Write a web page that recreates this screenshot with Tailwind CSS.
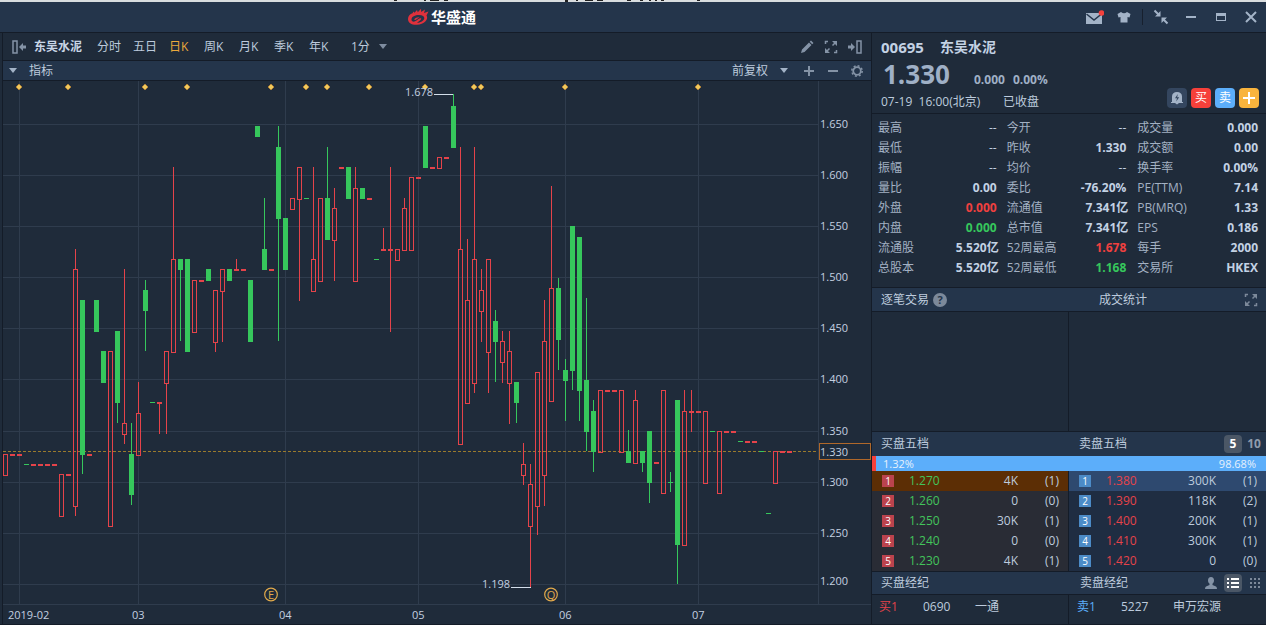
<!DOCTYPE html>
<html lang="zh-CN">
<head>
    <meta charset="UTF-8">
    <meta name="viewport" content="width=device-width, initial-scale=1.0">
    <title>华盛通 - 东吴水泥 00695</title>
    <script src="https://cdn.jsdelivr.net/npm/@tailwindcss/browser@4"></script>
</head>
<body class="bg-[#1f2b3a] text-[#bdcbdd] text-[12px] leading-5 font-['Open_Sans','Noto_Sans_CJK_SC',sans-serif]">

    <!-- Title bar -->
    <div class="h-[2px] bg-[#d9dddf]">
        <svg class="block w-full h-[2px]" aria-hidden="true" fill="#222">
            <rect x="394" width="3" height="1"/><rect x="424" width="2" height="1"/><rect x="430" width="9" height="1"/><rect x="444" width="4" height="1"/>
            <rect x="565" width="3" height="2"/><rect x="576" width="2" height="1"/><rect x="585" width="8" height="1"/><rect x="597" width="6" height="1"/>
            <rect x="627" width="4" height="1"/><rect x="640" width="3" height="1"/><rect x="649" width="2" height="1"/><rect x="655" width="2" height="1"/><rect x="661" width="3" height="1"/><rect x="697" width="3" height="1"/>
        </svg>
    </div>
    <header class="flex items-center h-[31px] pl-[407px] bg-[#24354b] border-b border-[#141c28]">
        <svg class="w-[22px] h-[18px]" viewBox="0 0 22 18" aria-hidden="true">
            <path d="M1 11C1 8 3 6 5.500 5.200L6.500 3.500L7.500 4.700L10 2L10.800 4.200L14 .8L14.200 4L18 1.500L17 5L21.500 3.500L19.500 7.500C22 11.500 17 16.500 10 16.800C4.500 17 1 15 1 11Z" fill="#e0313c"/>
            <path d="M4.500 11.500C4.500 8.500 8 7 12 7C15.500 7 17.500 8.300 17.300 10.300C17 13 13.500 14.800 10 14.800C11 13.800 13.800 12.500 14.300 10.800C13.300 9.600 11.500 11 10.500 11.800C9 13 7 14 5.700 13.500C4.900 13 4.500 12.500 4.500 11.500Z" fill="#24354b"/>
            <path d="M7 11.500C8.500 9.500 11 8.800 12.500 9.300C11.500 10 10 11.300 8.500 12Z" fill="#e0313c"/>
        </svg>
        <h1 class="ml-[2px] text-[15px] font-bold text-white">华盛通</h1>
        <div class="flex items-center ml-auto text-[#a3b3c7]">
            <button class="flex justify-center w-[30px]" aria-label="消息">
                <svg class="w-[20px] h-[16px]" viewBox="0 0 20 16"><rect x="2" y="4" width="16" height="11" fill="currentColor"/><path d="M2.500 5L10 11L17.500 5" fill="none" stroke="#24354b" stroke-width="1.500"/><circle cx="17.500" cy="4" r="2.800" fill="#f5413c"/></svg>
            </button>
            <button class="flex justify-center w-[30px]" aria-label="皮肤">
                <svg class="w-[14px] h-[12px]" viewBox="0 0 14 12" fill="currentColor"><path d="M4 1Q7 3.500 10 1L13.500 3L12.500 6.500L10.500 6V11.500H3.500V6L1.500 6.500L.5 3Z"/></svg>
            </button>
            <span class="mx-[3px] w-px h-4 bg-[#17202e]"></span>
            <button class="flex justify-center w-[30px]" aria-label="精简模式">
                <svg class="w-[16px] h-[16px]" viewBox="0 0 16 16" fill="currentColor" stroke="currentColor"><path d="M7.500 2V7.500H2Z M8.500 8.500H14L8.500 14Z" stroke="none"/><path d="M1.500 1.500L5.500 5.500M14.500 14.500L10.500 10.500" stroke-width="2"/></svg>
            </button>
            <button class="flex justify-center w-[30px]" aria-label="最小化">
                <svg class="w-[10px] h-[10px]" viewBox="0 0 10 10"><rect y="4" width="10" height="2" fill="currentColor"/></svg>
            </button>
            <button class="flex justify-center w-[30px]" aria-label="最大化">
                <svg class="w-[10px] h-[8px]" viewBox="0 0 10 8" fill="none" stroke="currentColor"><rect x=".5" y=".5" width="9" height="7"/><path d="M0 1.500H10" stroke-width="3"/></svg>
            </button>
            <button class="flex justify-center w-[30px]" aria-label="关闭">
                <svg class="w-[12px] h-[12px]" viewBox="0 0 12 12" fill="none" stroke="currentColor" stroke-width="2"><path d="M1 1L11 11M11 1L1 11"/></svg>
            </button>
        </div>
    </header>

    <main class="flex border-b border-[#141c28]">

        <!-- Left: chart -->
        <section class="flex-1 min-w-0 ml-[2px] border-l border-[#141c28]">
            <nav class="flex items-center h-[28px] pl-[8px] pr-1 border-b border-[#141c28]">
                <button aria-label="展开列表">
                    <svg class="block w-[15px] h-[14px] text-[#8493a6]" viewBox="0 0 15 14"><rect x="2" y="1" width="4" height="12" fill="none" stroke="currentColor" stroke-width="1.500"/><path d="M8 7L12 3V5.500H15V8.500H12V11Z" fill="currentColor"/></svg>
                </button>
                <b class="ml-[8px] w-[63px] text-[#c9d6e6] whitespace-nowrap">东吴水泥</b>
                <button class="w-9 text-left">分时</button>
                <button class="w-9 text-left">五日</button>
                <button class="w-[35px] text-left text-[#eba93c]">日K</button>
                <button class="w-[35px] text-left">周K</button>
                <button class="w-[35px] text-left">月K</button>
                <button class="w-[35px] text-left">季K</button>
                <button class="w-[35px] text-left">年K</button>
                <div class="flex items-center ml-[7px]">
                    <select class="appearance-none bg-transparent w-[36px]" aria-label="分钟周期"><option>1分</option></select>
                    <svg class="-ml-2 w-[8px] h-[5px] text-[#7e8da0] pointer-events-none" viewBox="0 0 8 5"><path d="M0 0H8L4 5Z" fill="currentColor"/></svg>
                </div>
                <div class="flex ml-auto text-[#8493a6]">
                    <button class="flex justify-center w-6" aria-label="画线">
                        <svg class="w-[14px] h-[14px]" viewBox="0 0 14 14" fill="currentColor"><path d="M1 13L2 9.500L9 2.500L11.500 5L4.500 12Z M9.700 1.800L11 .5L13.500 3L12.200 4.300Z"/></svg>
                    </button>
                    <button class="flex justify-center w-6" aria-label="全屏">
                        <svg class="w-[14px] h-[14px]" viewBox="0 0 14 14" fill="none" stroke="currentColor" stroke-width="1.500"><path d="M1.500 4V1.500H4M10 12.500H12.500V10"/><path d="M8.500 5.500L12 2M5.500 8.500L2 12"/><path d="M8 1H13V6Z M1 8V13H6Z" fill="currentColor" stroke="none"/></svg>
                    </button>
                    <button class="flex justify-center w-6" aria-label="收起报价">
                        <svg class="w-[14px] h-[14px]" viewBox="0 0 14 14"><rect x="9" y="1" width="4" height="12" fill="none" stroke="currentColor" stroke-width="1.500"/><path d="M7 7L3 3V5.500H0V8.500H3V11Z" fill="currentColor"/></svg>
                    </button>
                </div>
            </nav>
            <div class="flex items-center h-[20px] pl-[6px] pr-[2px] bg-[#24354b] border-b border-[#141c28]">
                <button class="flex items-center gap-3">
                    <svg class="w-[8px] h-[5px] text-[#a3b3c7]" viewBox="0 0 8 5"><path d="M0 0H8L4 5Z" fill="currentColor"/></svg>
                    指标
                </button>
                <div class="flex items-center ml-auto">
                    <select class="appearance-none bg-transparent w-[56px]" aria-label="复权方式"><option>前复权</option></select>
                    <svg class="-ml-2 mr-[9px] w-[8px] h-[5px] text-[#a3b3c7] pointer-events-none" viewBox="0 0 8 5"><path d="M0 0H8L4 5Z" fill="currentColor"/></svg>
                </div>
                <div class="flex text-[#8493a6]">
                    <button class="flex justify-center w-6" aria-label="放大">
                        <svg class="w-[12px] h-[12px]" viewBox="0 0 12 12" stroke="currentColor" stroke-width="2"><path d="M1 6H11M6 1V11"/></svg>
                    </button>
                    <button class="flex justify-center w-6" aria-label="缩小">
                        <svg class="w-[12px] h-[12px]" viewBox="0 0 12 12" stroke="currentColor" stroke-width="2"><path d="M1 6H11"/></svg>
                    </button>
                    <button class="flex justify-center w-6" aria-label="设置">
                        <svg class="w-[12px] h-[12px]" viewBox="0 0 12 12" fill="none" stroke="currentColor"><circle cx="6" cy="6" r="3.800" stroke-width="1.800"/><circle cx="6" cy="6" r="5.200" stroke-width="1.500" stroke-dasharray="2 2.080"/></svg>
                    </button>
                </div>
            </div>

            <svg id="chart" class="block w-full h-auto text-[11px]" viewBox="3 81 868 543" role="img" aria-label="东吴水泥 日K">
                <g id="grid" stroke="#2f3c4d" shape-rendering="crispEdges"></g>
                <path d="M3 451.500H818" stroke="#9a7a2c" stroke-dasharray="3 2" shape-rendering="crispEdges"/>
                <g id="candles" shape-rendering="crispEdges"></g>
                <g id="marks" fill="#f0c95c" stroke="#c9852b" stroke-width=".6"></g>
                <path d="M434 94.500H453M511 587.500H531" stroke="#d3deea" shape-rendering="crispEdges"/>
                <rect x="819.500" y="443.500" width="51" height="16" fill="none" stroke="#b0682a" shape-rendering="crispEdges"/>
                <g id="labels" fill="#c3d0e0">
                    <text x="405" y="96">1.678</text>
                    <text x="482" y="588">1.198</text>
                </g>
                <g fill="none" stroke="#e0a94b" stroke-width="1.200"><circle cx="271" cy="594.500" r="6.300"/><circle cx="551" cy="594.500" r="6.300"/></g>
                <g fill="#e0a94b" text-anchor="middle"><text x="271" y="598.500">E</text><text x="551" y="598.500">Q</text></g>
            </svg>
        </section>

        <!-- Right: quote -->
        <aside class="w-[395px] shrink-0 flex flex-col border-l border-[#141c28]">
            <div class="h-[81px] pl-[9px] pr-[7px] border-b border-[#141c28] whitespace-nowrap">
                <h2 class="flex items-center gap-4 h-7 font-bold text-[#c3d2e4]"><span class="text-[15px]">00695</span><span class="text-[14px]">东吴水泥</span></h2>
                <div class="flex items-baseline h-[26px] pl-[2px] font-bold text-[#9fb0c6]"><span class="w-[91px] text-[26px] leading-[26px]">1.330</span><span class="mr-2">0.000</span><span>0.00%</span></div>
                <div class="flex items-center h-[26px]">
                    <span class="w-[122px] pt-[3px]">07-19&nbsp; 16:00(北京)</span><span class="pt-[3px]">已收盘</span>
                    <div class="flex gap-1 ml-auto -mt-1 text-white">
                        <button class="flex items-center justify-center size-5 rounded-sm bg-[#34465f]" aria-label="提醒">
                            <svg class="w-[12px] h-[14px]" viewBox="0 0 12 14"><path d="M1 11V5.500C1 2.500 3 1 6 1S11 2.500 11 5.500V11H12V12H8L6 13.500L4 12H0V11Z" fill="#a3b3c7"/><path d="M6.800 3L4 7.300H6L5.200 10.500L8.200 6.200H6.200Z" fill="#34465f"/></svg>
                        </button>
                        <button class="size-5 rounded-sm bg-[#f6403a]">买</button>
                        <button class="size-5 rounded-sm bg-[#5caefa]">卖</button>
                        <button class="flex items-center justify-center size-5 rounded-sm bg-[#f9b43d]" aria-label="添加自选">
                            <svg class="w-[12px] h-[12px]" viewBox="0 0 12 12" stroke="currentColor" stroke-width="2"><path d="M0 6H12M6 0V12"/></svg>
                        </button>
                    </div>
                </div>
            </div>

            <div class="h-[174px] pt-1 px-[6px] border-b border-[#141c28]">
                <table class="w-full table-fixed whitespace-nowrap text-right [&_th]:text-left [&_th]:font-normal [&_th]:text-[#a3b1c3] [&_td]:font-bold [&_td]:text-[#c3d2e4]">
                    <colgroup><col class="w-[60px]"><col><col class="w-[69px]"><col><col class="w-[71px]"><col></colgroup>
                    <tbody id="stats"></tbody>
                </table>
            </div>

            <div class="flex items-center h-[24px] bg-[#24354b] border-b border-[#141c28]">
                <div class="flex items-center gap-1 w-1/2 pl-[9px]">逐笔交易
                    <button class="size-[14px] rounded-full bg-[#7c899a] text-[#24354b] text-[11px] leading-[14px] font-bold" aria-label="帮助">?</button>
                </div>
                <div class="flex items-center flex-1 pl-[30px]">成交统计
                    <button class="ml-auto mr-2 text-[#7c899a]" aria-label="展开">
                        <svg class="block w-[14px] h-[14px]" viewBox="0 0 14 14" fill="none" stroke="currentColor" stroke-width="1.500"><path d="M1.500 4V1.500H4M10 12.500H12.500V10"/><path d="M8.500 5.500L12 2M5.500 8.500L2 12"/><path d="M8 1H13V6Z M1 8V13H6Z" fill="currentColor" stroke="none"/></svg>
                    </button>
                </div>
            </div>
            <div class="grid grid-cols-2 h-[120px] border-b border-[#141c28]">
                <div class="border-r border-[#141c28]"></div>
            </div>

            <!-- Order book -->
            <div class="flex items-center h-[24px] bg-[#24354b]">
                <div class="w-1/2 pl-[9px]">买盘五档</div>
                <div class="flex items-center flex-1 pl-[10px]">卖盘五档
                    <button class="ml-auto w-[18px] h-[18px] leading-[18px] rounded-sm bg-[#4b5766] text-white font-bold">5</button>
                    <button class="mx-[4px] w-[16px] font-bold text-[#8f9cad]">10</button>
                </div>
            </div>
            <div class="flex justify-between h-[15px] pl-[7px] pr-[10px] border-l-4 border-[#f6403a] bg-[#5caefa] text-[11px] leading-[15px] text-[#e6f1fc]"><span>1.32%</span><span>98.68%</span></div>
            <div class="grid grid-cols-2 h-[100px] border-b border-[#141c28]">
                <div class="border-r border-[#141c28]">
                    <table class="w-full table-fixed text-right"><colgroup><col class="w-[37px]"><col class="w-[50px]"><col><col class="w-[50px]"></colgroup><tbody id="bids"></tbody></table>
                </div>
                <table class="w-full table-fixed text-right"><colgroup><col class="w-[37px]"><col class="w-[50px]"><col><col class="w-[50px]"></colgroup><tbody id="asks"></tbody></table>
            </div>

            <!-- Brokers -->
            <div class="relative flex items-center h-[24px] bg-[#24354b] border-y border-[#141c28]">
                <div class="w-1/2 pl-[9px]">买盘经纪</div>
                <div class="flex items-center flex-1 pl-[11px]">卖盘经纪
                    <button class="ml-auto mr-[7px] text-[#8493a6]" aria-label="经纪"><svg class="block w-[12px] h-[12px]" viewBox="0 0 12 12" fill="currentColor"><path d="M6 0C8 0 9 1.500 9 3.500C9 5 8.300 6 7.500 6.700V8L11 9.500Q12 10 12 12H0Q0 10 1 9.500L4.500 8V6.700C3.700 6 3 5 3 3.500C3 1.500 4 0 6 0Z"/></svg></button>
                    <button class="flex items-center justify-center w-[18px] h-[18px] rounded-sm bg-[#4b5766] text-white" aria-label="列表"><svg class="w-[12px] h-[12px]" viewBox="0 0 12 12" fill="currentColor" shape-rendering="crispEdges"><path d="M0 1H2V3H0Z M4 1H12V3H4Z M0 5H2V7H0Z M4 5H12V7H4Z M0 9H2V11H0Z M4 9H12V11H4Z"/></svg></button>
                    <button class="ml-[7px] mr-[5px] text-[#7c899a]" aria-label="网格"><svg class="block w-[12px] h-[12px]" viewBox="0 0 12 12" fill="currentColor" shape-rendering="crispEdges"><path d="M1 1h2v2h-2z M5 1h2v2h-2z M9 1h2v2h-2z M1 5h2v2h-2z M5 5h2v2h-2z M9 5h2v2h-2z M1 9h2v2h-2z M5 9h2v2h-2z M9 9h2v2h-2z"/></svg></button>
                </div>
            </div>
            <div class="grid grid-cols-2 flex-1">
                <div class="flex pt-[2px] pl-[7px] border-r border-[#141c28]"><span class="w-[44px] text-[#e5434a]">买1</span><span class="w-[52px]">0690</span><span>一通</span></div>
                <div class="flex pt-[2px] pl-[8px]"><span class="w-[44px] text-[#5caefa]">卖1</span><span class="w-[52px]">5227</span><span>申万宏源</span></div>
            </div>
        </aside>
    </main>

    <script>
        // [color, high, top, bottom, low]; a single number after the color is a flat bar
        const candles = [
            ['r',454,454,476,476],['r',454],['r',454],['g',464],['r',464],['r',464],['r',464],['r',464],
            ['r',474,474,517,517],['r',474],['r',249,269,507,516],['g',300,300,455,474],['r',454],
            ['g',300,300,332,332],['g',351,351,383,383],['r',351,351,527,527],['g',331,331,403,423],
            ['r',269,423,435,444],['g',423,454,495,505],['r',382,413,456,456],['g',280,290,311,351],
            ['g',402],['r',402,402,404,434],['r',351,351,384,434],['r',167,259,353,353],
            ['g',259,259,270,341],['g',259,259,352,352],['r',280,280,333,333],['r',280],
            ['g',269,269,281,281],['r',290,290,343,352],['r',269,269,292,342],['g',269,269,281,281],
            ['r',259,269,271,271],['r',269],['g',280,280,342,342],['g',126,126,137,137],
            ['g',198,249,270,270],['r',269],['g',126,147,219,341],['g',218,218,270,270],
            ['r',198,198,210,210],['r',167,167,200,301],['g',198],['r',167,259,292,292],
            ['r',198,198,282,282],['g',147,198,240,240],['r',188,208,241,281],['r',167],
            ['g',167,167,199,199],['r',167,188,282,282],['g',188,188,199,199],['r',198],['g',259],
            ['r',228,249,251,251],['r',167,249,251,332],['r',249,249,261,261],['r',198,208,251,251],
            ['r',177,177,251,251],['r',177],['g',126,126,168,168],['r',167],['r',157,157,169,169],['r',157],
            ['g',94,106,148,148],['r',147,249,445,445],['r',239,300,404,404],['r',147,259,384,393],
            ['r',269,290,312,342],['r',259,259,353,393],['g',310,321,342,382],['r',331,341,363,383],
            ['r',331,351,384,424],['g',382,382,403,423],['r',443,464,476,485],['r',464,484,527,587],
            ['r',372,372,507,535],['r',300,341,476,506],['r',186,288,402,402],['g',278,288,340,370],
            ['g',359,370,381,421],['g',226,226,371,390],['g',237,237,391,421],['g',298,380,432,451],
            ['g',400,411,452,472],['r',390,390,453,453],['r',390],['r',390],['r',390,390,453,453],
            ['g',430,451,463,463],['r',390,400,464,464],['g',451,451,463,472],['g',431,431,483,503],
            ['r',462],['r',390,390,494,494],['g',472,482,483,492],['g',400,400,545,584],
            ['r',390,411,546,546],['r',390,411,413,432],['r',411],['r',411,411,484,484],['g',431],
            ['r',431,431,494,494],['r',431],['r',431],['g',441],['r',441],['r',441],['g',451],['g',513],
            ['r',451,451,484,484],['r',451],['r',451]
        ];
        const colors = { r: '#e5434a', g: '#36c75c' };
        const rect = (x, y, w, h, c) => `<rect x="${x}" y="${y}" width="${w}" height="${h}" fill="${c}"/>`;

        document.getElementById('candles').innerHTML = candles.map(([k, high, top, bottom, low], i) => {
            const x = 5 + 7 * i, c = colors[k];
            if (top === undefined) return rect(x - 2, high, 5, k === 'r' ? 2 : 1, c);
            const wick = rect(x, high, 1, top - high, c) + rect(x, bottom, 1, low - bottom, c);
            if (k === 'g' || bottom - top < 3) return wick + rect(x - 2, top, 5, bottom - top, c);
            return wick + `<rect x="${x - 1.5}" y="${top + 0.5}" width="4" height="${bottom - top - 1}" fill="none" stroke="${c}"/>`;
        }).join('');

        // Grid lines and axis labels
        const rows = [124, 175, 226, 277, 328, 379, 431, 482, 533, 584];
        const months = [[19, '2019-02', 8], [138, '03', 132], [285, '04', 279], [418, '05', 412], [565, '06', 559], [698, '07', 692]];
        document.getElementById('grid').innerHTML =
            rows.map(y => `<path d="M3 ${y}.5H818"/>`).join('') +
            months.map(([x]) => `<path d="M${x}.5 81V604"/>`).join('') +
            '<path d="M818.5 81V604M3 604.5H871"/>';
        document.getElementById('labels').innerHTML +=
            rows.map((y, i) => `<text x="820" y="${(i === 9 ? 581 : y) + 4}">${(1.65 - i * 0.05).toFixed(3)}</text>`).join('') +
            '<text x="820" y="456">1.330</text>' +
            months.map(([, t, x]) => `<text x="${x}" y="619">${t}</text>`).join('');
        document.getElementById('marks').innerHTML =
            [19, 68, 145, 187, 271, 306, 327, 369, 425, 474, 481, 565, 698]
                .map(x => `<path d="M${x} 84L${x + 3} 87L${x} 90L${x - 3} 87Z"/>`).join('');

        // Quote table
        const stats = [
            ['最高', '--', '今开', '--', '成交量', '0.000'],
            ['最低', '--', '昨收', '1.330', '成交额', '0.00'],
            ['振幅', '--', '均价', '--', '换手率', '0.00%'],
            ['量比', '0.00', '委比', '-76.20%', 'PE(TTM)', '7.14'],
            ['外盘', '0.000', '流通值', '7.341亿', 'PB(MRQ)', '1.33'],
            ['内盘', '0.000', '总市值', '7.341亿', 'EPS', '0.186'],
            ['流通股', '5.520亿', '52周最高', '1.678', '每手', '2000'],
            ['总股本', '5.520亿', '52周最低', '1.168', '交易所', 'HKEX']
        ];
        const tint = { '外盘': 'text-[#f0403f]!', '52周最高': 'text-[#f0403f]!', '内盘': 'text-[#36c75c]!', '52周最低': 'text-[#36c75c]!' };
        const pads = ['', 'pl-2', 'pl-[9px]'];
        // values that end in 亿 run closer to the next label
        const cell = (name, v) => `<td class="${tint[name] || ''} ${v === '--' ? 'font-normal!' : ''} ${v.endsWith('亿') ? '' : 'pr-[2px]'}">${v}</td>`;
        document.getElementById('stats').innerHTML = stats.map(r => '<tr class="h-5">' + [0, 2, 4].map(i =>
            `<th scope="row" class="${pads[i / 2]}">${r[i]}</th>` + cell(r[i], r[i + 1])
        ).join('') + '</tr>').join('');

        // Order book
        const book = (id, list, first, rest, badge, price) => {
            document.getElementById(id).innerHTML = list.map(([p, v, n], i) => `
                <tr class="h-5 ${i ? rest : first}">
                    <td class="pl-[10px]"><span class="block size-[12px] text-[10px] leading-[12px] text-center text-white ${badge}">${i + 1}</span></td>
                    <td class="text-left ${price}">${p}</td><td>${v}</td><td class="pr-[9px]">(${n})</td>
                </tr>`).join('');
        };
        book('bids', [['1.270', '4K', 1], ['1.260', '0', 0], ['1.250', '30K', 1], ['1.240', '0', 0], ['1.230', '4K', 1]],
            'bg-[#5c2e05]', 'bg-[#292c35]', 'bg-[#bb434d]', 'text-[#43c45b]');
        book('asks', [['1.380', '300K', 1], ['1.390', '118K', 2], ['1.400', '200K', 1], ['1.410', '300K', 1], ['1.420', '0', 0]],
            'bg-[#2e496f]', 'bg-[#1f2d42]', 'bg-[#4c8bc7]', 'text-[#e5434a]');
    </script>
</body>
</html>
